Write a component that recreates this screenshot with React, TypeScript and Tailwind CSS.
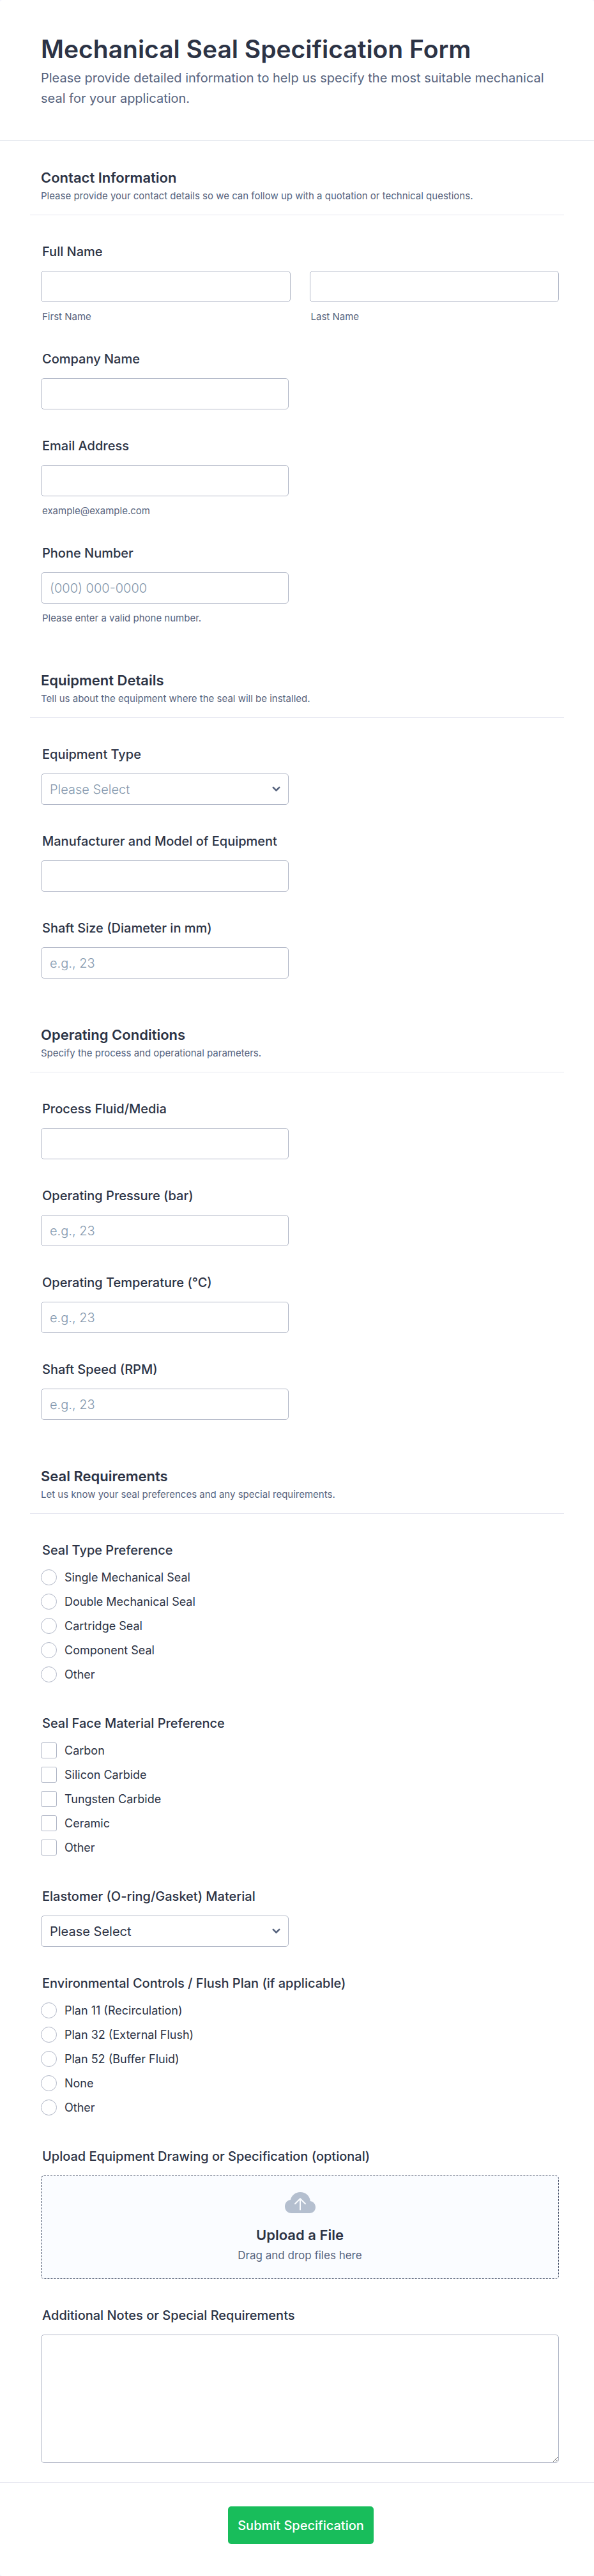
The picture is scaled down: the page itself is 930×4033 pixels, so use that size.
import React from 'react';

const inputClass =
  'block h-[49px] w-full rounded-[5px] border border-[#b0b6c6] bg-white px-[13px] text-[20px] placeholder:font-light placeholder:text-[#8598ad] outline-none focus:border-[#4277ff]';

const labelClass = 'mb-[18px] block pl-[2px] text-[20px] leading-6 font-medium text-[#2c3345]';

const hintClass = 'block pl-[2px] text-[15px] leading-[18px] text-[#57647e]';

interface FieldProps {
  id: string;
  label: string;
  hint?: string;
  children: React.ReactNode;
}

const Field: React.FC<FieldProps> = ({ id, label, hint, children }) => (
  <div>
    <label htmlFor={id} className={labelClass}>
      {label}
    </label>
    {children}
    {hint && <p className={`mt-[14px] ${hintClass}`}>{hint}</p>}
  </div>
);

interface TextFieldProps {
  id: string;
  label: string;
  type?: string;
  placeholder?: string;
  hint?: string;
}

const TextField: React.FC<TextFieldProps> = ({ id, label, type = 'text', placeholder, hint }) => (
  <Field id={id} label={label} hint={hint}>
    <div className="max-w-[388px]">
      <input
        id={id}
        name={id}
        type={type}
        placeholder={placeholder}
        className={`${inputClass} text-[#2c3345]`}
      />
    </div>
  </Field>
);

interface SelectFieldProps {
  id: string;
  label: string;
  options: string[];
  muted?: boolean;
}

const SelectField: React.FC<SelectFieldProps> = ({ id, label, options, muted }) => (
  <Field id={id} label={label}>
    <div className="relative max-w-[388px]">
      <select
        id={id}
        name={id}
        defaultValue=""
        className={`${inputClass} appearance-none ${muted ? 'font-light text-[#8598ad]' : 'text-[#2c3345]'}`}
      >
        <option value="">Please Select</option>
        {options.map(option => (
          <option key={option} value={option}>
            {option}
          </option>
        ))}
      </select>
      <svg
        className="pointer-events-none absolute top-5 right-[13px] h-[9px] w-[13px] text-[#57647e]"
        viewBox="0 0 13 9"
        fill="none"
        stroke="currentColor"
        strokeWidth="2.6"
        strokeLinecap="round"
        strokeLinejoin="round"
      >
        <path d="M1.8 1.8 6.5 6.5l4.7-4.7" />
      </svg>
    </div>
  </Field>
);

interface ChoiceFieldProps {
  name: string;
  label: string;
  type: 'radio' | 'checkbox';
  options: string[];
}

const ChoiceField: React.FC<ChoiceFieldProps> = ({ name, label, type, options }) => (
  <fieldset className="pb-[7px]">
    <legend className={labelClass}>{label}</legend>
    <div className="flex flex-col gap-[13px]">
      {options.map(option => (
        <label key={option} className="flex items-center gap-3 self-start text-lg leading-[25px] text-[#2c3345]">
          <input
            type={type}
            name={name}
            value={option}
            className={`size-[25px] shrink-0 appearance-none border border-[#b0b6c6] bg-white checked:border-[#4277ff] checked:bg-[#4277ff] ${
              type === 'radio' ? 'rounded-full' : 'rounded-[3px]'
            }`}
          />
          {option}
        </label>
      ))}
    </div>
  </fieldset>
);

interface SectionProps {
  title: string;
  subtitle: string;
  children: React.ReactNode;
}

const Section: React.FC<SectionProps> = ({ title, subtitle, children }) => (
  <section>
    <div className="border-b border-[#e6e7f0] px-[17px] pb-[17px]">
      <h2 className="text-[22px] leading-7 font-semibold text-[#2c3345]">{title}</h2>
      <p className="mt-[3px] text-[15px] leading-6 text-[#57647e]">{subtitle}</p>
    </div>
    <div className="flex flex-col gap-[45px] pt-[45px] pr-2 pl-[17px]">{children}</div>
  </section>
);

export default function App() {
  return (
    <div className="bg-[#f3f3fe] font-['Inter',sans-serif]">
      <form className="rounded-[4px] bg-white" onSubmit={e => e.preventDefault()}>
        <header className="border-b border-[#d0d6e2] px-16 pt-[53px] pb-[50px]">
          <h1 className="text-[39px] leading-[48px] font-semibold text-[#2c3345]">
            Mechanical Seal Specification Form
          </h1>
          <p className="mt-[5px] text-[20px] leading-8 text-[#57647e]">
            Please provide detailed information to help us specify the most suitable mechanical seal for your
            application.
          </p>
        </header>

        <div className="flex flex-col gap-[74px] px-[47px] pt-[43px] pb-[30px]">
          <Section
            title="Contact Information"
            subtitle="Please provide your contact details so we can follow up with a quotation or technical questions."
          >
            <fieldset>
              <legend className={labelClass}>Full Name</legend>
              <div className="grid grid-cols-2 gap-[30px]">
                <div className="flex flex-col gap-[14px]">
                  <input id="first-name" name="first-name" type="text" className={`${inputClass} text-[#2c3345]`} />
                  <label htmlFor="first-name" className={hintClass}>
                    First Name
                  </label>
                </div>
                <div className="flex flex-col gap-[14px]">
                  <input id="last-name" name="last-name" type="text" className={`${inputClass} text-[#2c3345]`} />
                  <label htmlFor="last-name" className={hintClass}>
                    Last Name
                  </label>
                </div>
              </div>
            </fieldset>
            <TextField id="company" label="Company Name" />
            <TextField id="email" label="Email Address" type="email" hint="example@example.com" />
            <TextField
              id="phone"
              label="Phone Number"
              type="tel"
              placeholder="(000) 000-0000"
              hint="Please enter a valid phone number."
            />
          </Section>

          <Section title="Equipment Details" subtitle="Tell us about the equipment where the seal will be installed.">
            <SelectField id="equipment-type" label="Equipment Type" options={['Pump', 'Mixer', 'Compressor']} muted />
            <TextField id="model" label="Manufacturer and Model of Equipment" />
            <TextField id="shaft-size" label="Shaft Size (Diameter in mm)" type="number" placeholder="e.g., 23" />
          </Section>

          <Section title="Operating Conditions" subtitle="Specify the process and operational parameters.">
            <TextField id="fluid" label="Process Fluid/Media" />
            <TextField id="pressure" label="Operating Pressure (bar)" type="number" placeholder="e.g., 23" />
            <TextField id="temperature" label="Operating Temperature (°C)" type="number" placeholder="e.g., 23" />
            <TextField id="speed" label="Shaft Speed (RPM)" type="number" placeholder="e.g., 23" />
          </Section>

          <Section
            title="Seal Requirements"
            subtitle="Let us know your seal preferences and any special requirements."
          >
            <ChoiceField
              name="seal-type"
              label="Seal Type Preference"
              type="radio"
              options={[
                'Single Mechanical Seal',
                'Double Mechanical Seal',
                'Cartridge Seal',
                'Component Seal',
                'Other',
              ]}
            />
            <ChoiceField
              name="face-material"
              label="Seal Face Material Preference"
              type="checkbox"
              options={['Carbon', 'Silicon Carbide', 'Tungsten Carbide', 'Ceramic', 'Other']}
            />
            <SelectField id="elastomer" label="Elastomer (O-ring/Gasket) Material" options={['Viton', 'EPDM', 'Nitrile']} />
            <ChoiceField
              name="flush-plan"
              label="Environmental Controls / Flush Plan (if applicable)"
              type="radio"
              options={[
                'Plan 11 (Recirculation)',
                'Plan 32 (External Flush)',
                'Plan 52 (Buffer Fluid)',
                'None',
                'Other',
              ]}
            />
            <Field id="upload" label="Upload Equipment Drawing or Specification (optional)">
              <label
                htmlFor="upload"
                className="flex h-[162px] cursor-pointer flex-col items-center rounded-[5px] border border-dashed border-[#3f4a63] bg-[#fafcff] pt-[25px]"
              >
                <svg className="h-[33px] w-12" viewBox="0 0 48 33" fill="none">
                  <path
                    d="M10.500 33C4.500 33 0 28.500 0 22.500 0 17 3.500 13 8.800 12 10.500 5 16.500 0 24 0c8.500 0 15.200 6 15.800 14C44.500 14.800 48 18.500 48 23.500 48 29 44 33 38.500 33Z"
                    fill="#b4bfcf"
                  />
                  <path
                    d="M24 27.500V10.500M16 18.200l8-8 8 8"
                    stroke="#fafcff"
                    strokeWidth="2"
                    strokeLinecap="round"
                    strokeLinejoin="round"
                  />
                </svg>
                <span className="mt-[18px] text-[22px] leading-8 font-semibold text-[#2c3345]">Upload a File</span>
                <span className="mt-[2px] text-[17px] leading-7 text-[#57647e]">Drag and drop files here</span>
              </label>
              <input id="upload" name="upload" type="file" className="sr-only" />
            </Field>
            <Field id="notes" label="Additional Notes or Special Requirements">
              <textarea
                id="notes"
                name="notes"
                className="block h-[201px] w-full rounded-[5px] border border-[#b0b6c6] bg-white p-[13px] text-[20px] text-[#2c3345] outline-none focus:border-[#4277ff]"
              />
            </Field>
          </Section>
        </div>

        <footer className="flex justify-center border-t border-[#e6e7f0] pt-[37px] pb-[50px] pl-3">
          <button
            type="submit"
            className="h-[59px] rounded-[5px] bg-[#18bd5b] px-[15px] text-[20px] font-medium text-white hover:bg-[#16aa52]"
          >
            Submit Specification
          </button>
        </footer>
      </form>
    </div>
  );
}
